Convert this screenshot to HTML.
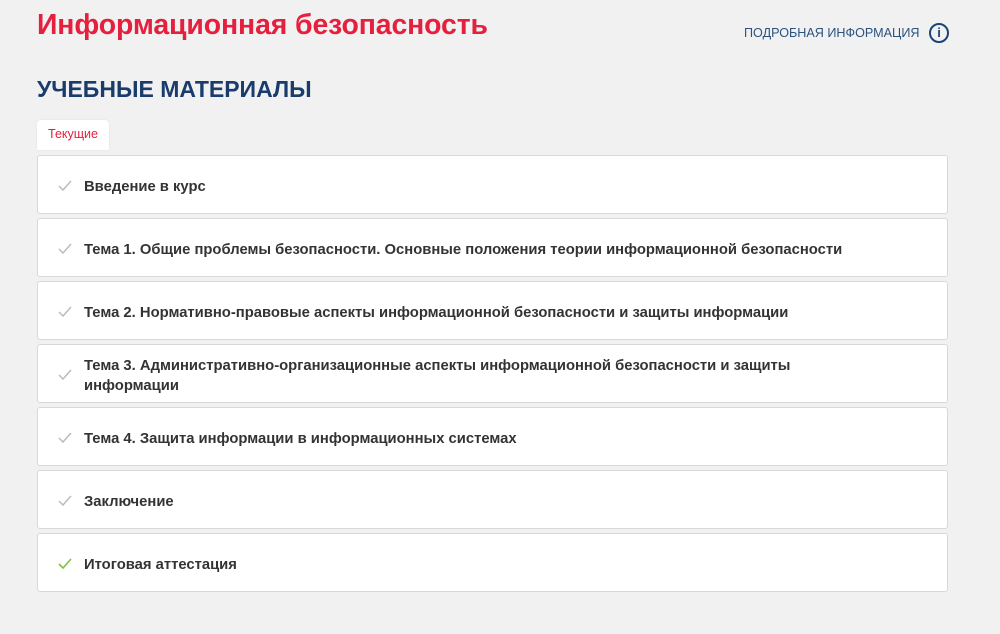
<!DOCTYPE html>
<html><head><meta charset="utf-8"><style>
body{margin:0;background:#f2f1f1;font-family:"Liberation Sans","DejaVu Sans",sans-serif;width:1000px;height:634px;overflow:hidden;position:relative}
h1{position:absolute;left:37px;top:9px;margin:0;font-size:28.4px;font-weight:bold;color:#e5203f;letter-spacing:-0.1px}
.info{position:absolute;left:744px;top:26px;font-size:12.6px;color:#2b527f;}
.ic{position:absolute;left:929px;top:23px;width:16px;height:16px;border:2px solid #1b4478;border-radius:50%;color:#1b4478;font-weight:bold;font-size:13px;text-align:center;line-height:16px}
h2{position:absolute;left:37px;top:76px;margin:0;font-size:23px;font-weight:bold;color:#193c6c}
.tab{position:absolute;left:37px;top:120px;width:72px;height:30px;background:#fff;border-radius:4px 4px 0 0;color:#e5203f;font-size:12.5px;text-align:center;line-height:29px;box-shadow:0 0 2px rgba(0,0,0,.08)}
.row{position:absolute;left:37px;width:909px;height:57px;background:#fff;border:1px solid #d8d8d8;border-radius:3px;box-sizing:content-box}
.row span{position:absolute;left:46px;top:calc(50% + 2px);transform:translateY(-50%);font-size:14.8px;font-weight:bold;color:#333;line-height:20px;width:820px}
.row svg{position:absolute;left:20px;top:24px}
</style></head><body>
<h1>Информационная безопасность</h1>
<div class="info">ПОДРОБНАЯ ИНФОРМАЦИЯ</div><div class="ic">i</div>
<h2>УЧЕБНЫЕ МАТЕРИАЛЫ</h2>
<div class="tab">Текущие</div>
<div class="row" style="top:155px"><svg width="14" height="11"><path d="M1 6l4 4 8-9" fill="none" stroke="#bbb" stroke-width="1.5"/></svg><span>Введение в курс</span></div>
<div class="row" style="top:218px"><svg width="14" height="11"><path d="M1 6l4 4 8-9" fill="none" stroke="#bbb" stroke-width="1.5"/></svg><span>Тема 1. Общие проблемы безопасности. Основные положения теории информационной безопасности</span></div>
<div class="row" style="top:281px"><svg width="14" height="11"><path d="M1 6l4 4 8-9" fill="none" stroke="#bbb" stroke-width="1.5"/></svg><span>Тема 2. Нормативно-правовые аспекты информационной безопасности и защиты информации</span></div>
<div class="row" style="top:344px"><svg width="14" height="11"><path d="M1 6l4 4 8-9" fill="none" stroke="#bbb" stroke-width="1.5"/></svg><span style="width:730px">Тема 3. Административно-организационные аспекты информационной безопасности и защиты информации</span></div>
<div class="row" style="top:407px"><svg width="14" height="11"><path d="M1 6l4 4 8-9" fill="none" stroke="#bbb" stroke-width="1.5"/></svg><span>Тема 4. Защита информации в информационных системах</span></div>
<div class="row" style="top:470px"><svg width="14" height="11"><path d="M1 6l4 4 8-9" fill="none" stroke="#bbb" stroke-width="1.5"/></svg><span>Заключение</span></div>
<div class="row" style="top:533px"><svg width="14" height="11"><path d="M1 6l4 4 8-9" fill="none" stroke="#7cc142" stroke-width="1.6"/></svg><span>Итоговая аттестация</span></div>
</body></html>
